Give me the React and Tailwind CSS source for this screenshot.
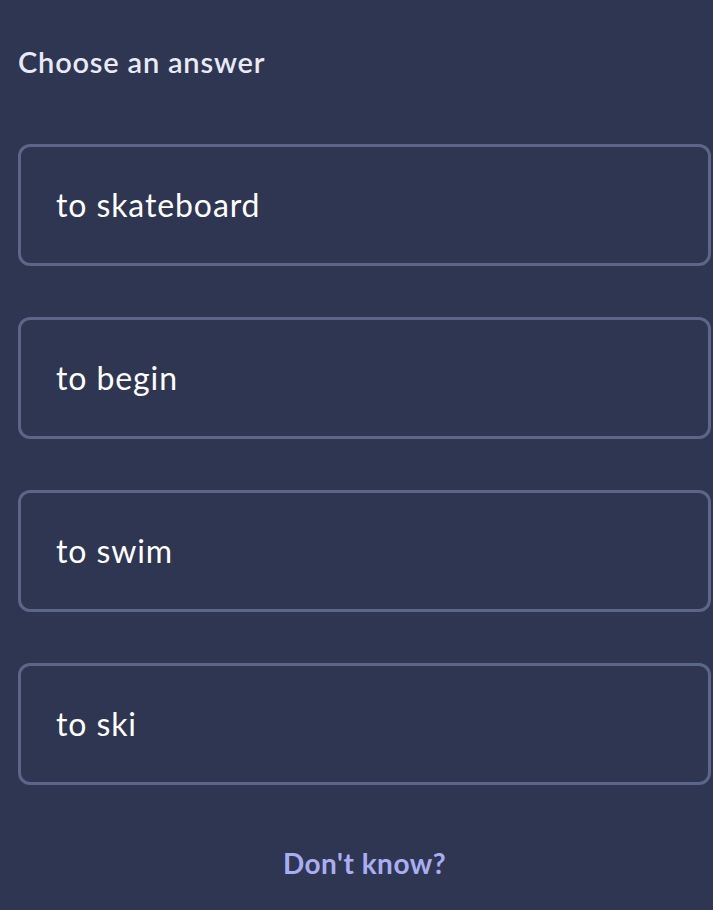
export default function App() {
  const answers = ["to skateboard", "to begin", "to swim", "to ski"];
  return (
    <div className="min-h-[910px] bg-[#2f3652] pl-[18px] pr-[2px] pt-[42px] font-['Lato',sans-serif]">
      <h1 className="text-[29px] font-semibold leading-[40px] tracking-[0.8px] text-[#e8eaf6]">Choose an answer</h1>

      <div className="mt-[62px] flex flex-col gap-[51px]">
        {answers.map((a) => (
          <button
            key={a}
            className="flex h-[122px] w-full items-center rounded-[12px] border-[3px] border-[#5b6689] bg-[#2f3652] pl-[35px] text-left text-[32px] tracking-[0.9px] text-white"
          >
            {a}
          </button>
        ))}
      </div>

      <div className="mt-[57px] text-center">
        <button className="text-[28px] font-bold tracking-[0.5px] text-[#a9aef2]">Don't know?</button>
      </div>
    </div>
  );
}
